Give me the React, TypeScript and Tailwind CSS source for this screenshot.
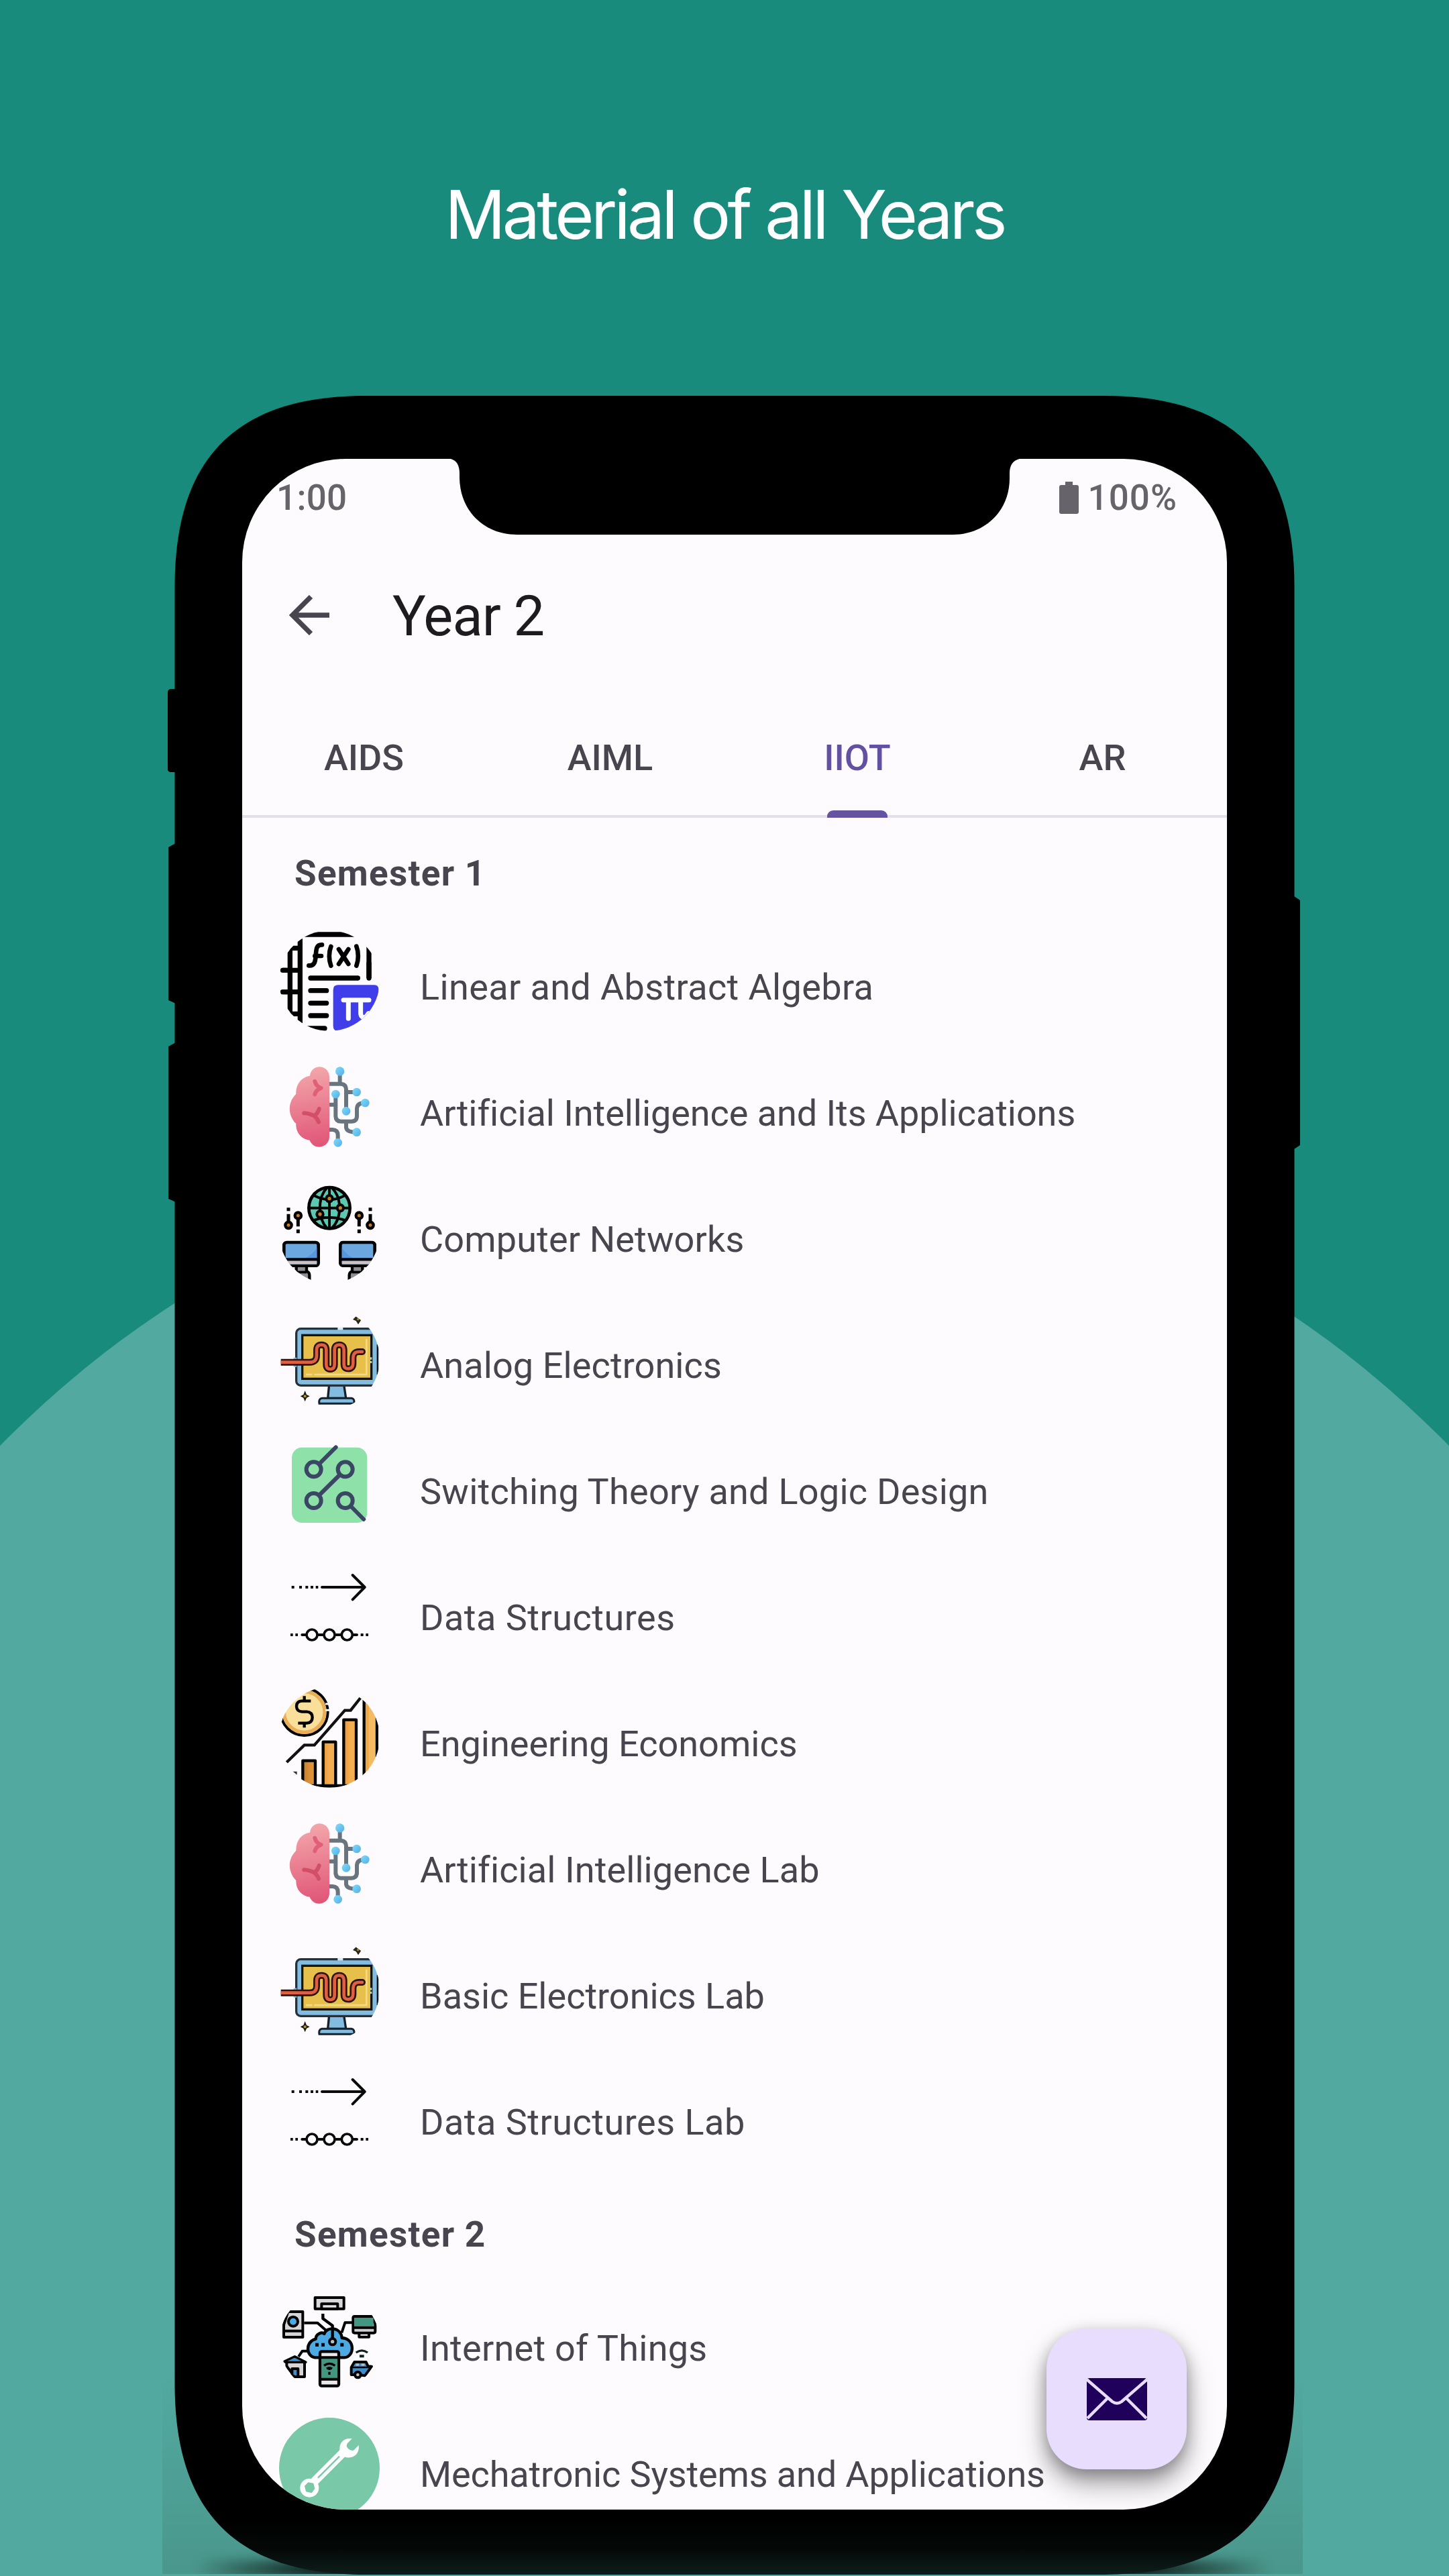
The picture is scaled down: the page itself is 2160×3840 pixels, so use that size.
import type { ReactNode } from "react";

/* ---------- subject icons (each one is clipped to a circle) ---------- */

function Round({ box, children }: { box: string; children: ReactNode }) {
  return (
    <svg viewBox={box} className="h-[150px] w-[150px] shrink-0 rounded-full" fill="none">
      {children}
    </svg>
  );
}

function AlgebraIcon() {
  return (
    <Round box="48 53 450 450">
      <g stroke="#000" strokeWidth="22">
        <path d="M120 71H400M142 90V470M97 130V430M450 115V266" />
        <path d="M64 231H142M64 328H142M97 132H142M97 426H142" />
        <g strokeLinecap="round">
          <path d="M64 231H80M64 328H80M189 266H400M189 322H260M189 378H260M189 434H260M160 491H252M450 200V266" />
        </g>
      </g>
      <g stroke="#000" strokeWidth="20" strokeLinecap="round" strokeLinejoin="round">
        <path d="M181 210C205 213 210 195 212 168C214 135 215 116 240 117M208 167H237" />
        <path d="M280 125C270 150 270 185 280 211M394 124C404 150 404 185 394 211M315 137L358 203M358 137L315 203" />
      </g>
      <path d="M312 297H475Q492 297 493 315V503H312Q290 503 290 480V319Q290 297 312 297Z" fill="#403EEB" />
      <g stroke="#fff" strokeWidth="21" strokeLinecap="round" strokeLinejoin="round">
        <path d="M336 364H450M358 366V447M413 366V425Q416 447 436 440L448 424" />
      </g>
    </Round>
  );
}

function BrainIcon() {
  return (
    <Round box="48 618 450 450">
      <defs>
        <linearGradient id="brain" x1="180" y1="660" x2="240" y2="1022" gradientUnits="userSpaceOnUse">
          <stop stopColor="#F3A9AC" />
          <stop offset="1" stopColor="#E15476" />
        </linearGradient>
        <linearGradient id="node" x1="0" y1="0" x2="1" y2="1">
          <stop stopColor="#7EDDF8" />
          <stop offset="1" stopColor="#56ACE8" />
        </linearGradient>
      </defs>
      <path
        d="M273 706C271 680 251 664 229 664C206 664 188 681 186 704C148 710 123 740 124 785C86 822 86 880 124 918C122 957 148 988 185 992C192 1010 207 1022 227 1022C252 1022 272 1003 273 978Z"
        fill="url(#brain)"
      />
      <path d="M208 729Q214 752 236 759Q214 766 208 787" stroke="#E0607A" strokeWidth="18" strokeLinecap="round" strokeLinejoin="round" />
      <path d="M160 871Q180 872 205 883Q222 872 227 852M205 883Q220 895 225 911" stroke="#D15067" strokeWidth="18" strokeLinecap="round" />
      <g stroke="#69757E" strokeWidth="18">
        <path d="M273 740H325Q348 742 348 765V860M320 740V690M348 777H390M273 833H301M301 790V885Q302 908 325 908H372Q396 907 396 884V850Q398 825 430 825M348 908V935Q350 956 392 956M273 945H288Q311 946 311 970V1000" />
      </g>
      <g fill="url(#node)">
        <circle cx="320" cy="684" r="20" />
        <circle cx="395" cy="777" r="19" />
        <circle cx="301" cy="786" r="19" />
        <circle cx="433" cy="825" r="19" />
        <circle cx="348" cy="862" r="19" />
        <circle cx="395" cy="956" r="19" />
        <circle cx="311" cy="1003" r="19" />
      </g>
    </Round>
  );
}

function Probe({ x, up }: { x: number; up?: boolean }) {
  return up ? (
    <g>
      <path d={`M${x} 218V268M${x} 281V298`} stroke="#000" strokeWidth="15" />
      <circle cx={x} cy="219" r="14" fill="#C47C26" stroke="#000" strokeWidth="13" />
    </g>
  ) : (
    <g>
      <path d={`M${x} 184V199M${x} 212V260`} stroke="#000" strokeWidth="15" />
      <circle cx={x} cy="262" r="14" fill="#C47C26" stroke="#000" strokeWidth="13" />
    </g>
  );
}

function Desktop({ x }: { x: number }) {
  return (
    <g transform={`translate(${x} 0)`}>
      <path d="M62 440H108V468Q121 472 121 486V515H10V480L62 472Z" fill="#8F8E96" stroke="#000" strokeWidth="13" />
      <path d="M62 472H108" stroke="#000" strokeWidth="11" />
      <rect x="7" y="339" width="154" height="104" rx="12" fill="#6DA7E0" stroke="#000" strokeWidth="14" />
      <path d="M154 362V410H100Q135 395 154 362Z" fill="#5797DE" />
      <path d="M10 415H158" stroke="#000" strokeWidth="13" />
      <path d="M14 430H154" stroke="#C4C3CB" strokeWidth="15" />
    </g>
  );
}

function NetworkIcon() {
  return (
    <Round box="48 72 450 450">
      <circle cx="273" cy="185" r="92" fill="#5BC8B2" stroke="#000" strokeWidth="14" />
      <g stroke="#000" strokeWidth="12">
        <path d="M273 92V278M180 185H366M205 130Q273 165 341 130M205 240Q273 215 341 240" />
        <path d="M262 95C220 140 220 230 262 275M284 95C330 140 330 230 284 275" />
      </g>
      <g fill="#C47C26" stroke="#000" strokeWidth="12">
        <circle cx="273" cy="143" r="14" />
        <circle cx="322" cy="185" r="14" />
        <circle cx="231" cy="213" r="14" />
      </g>
      <Probe x={90} />
      <Probe x={133} up />
      <Probe x={406} up />
      <Probe x={456} />
      <Desktop x={63} />
      <g transform="translate(546 0) scale(-1 1)">
        <Desktop x={63} />
      </g>
    </Round>
  );
}

function AnalogIcon() {
  return (
    <Round box="48 636 450 450">
      <path d="M272 975H338L347 1036H266Z" fill="#82BDE1" stroke="#16202A" strokeWidth="10" />
      <path d="M240 1036H372Q387 1038 383 1060H228Q224 1038 240 1036Z" fill="#82BDE1" stroke="#16202A" strokeWidth="9" />
      <rect x="125" y="725" width="400" height="254" rx="20" fill="#82BDE1" stroke="#25303A" strokeWidth="10" />
      <path d="M310 725H334" stroke="#D9EDF8" strokeWidth="11" />
      <rect x="152" y="754" width="309" height="195" fill="#E7C04B" stroke="#14140F" strokeWidth="10" />
      <path d="M439 770V930H205M196 930H168" stroke="#F3D98A" strokeWidth="8" />
      <path d="M120 854V896" stroke="#82BDE1" strokeWidth="14" />
      <g strokeLinejoin="round">
        <path
          d="M56 875H185Q216 875 216 845V820Q216 797 238 797Q259 797 259 820V885Q259 906 277 906Q296 906 296 885V820Q296 797 317 797Q338 797 338 820V885Q338 904 357 904Q379 904 379 880V855Q380 828 405 828H421"
          stroke="#2A1410"
          strokeWidth="30"
        />
        <circle cx="420" cy="828" r="15" fill="#2A1410" />
        <path
          d="M56 875H185Q216 875 216 845V820Q216 797 238 797Q259 797 259 820V885Q259 906 277 906Q296 906 296 885V820Q296 797 317 797Q338 797 338 820V885Q338 904 357 904Q379 904 379 880V855Q380 828 405 828H421"
          stroke="#DF5F42"
          strokeWidth="14"
        />
        <circle cx="420" cy="828" r="7" fill="#DF5F42" />
      </g>
      <path d="M459 853V882" stroke="#B8D9C0" strokeWidth="8" strokeDasharray="10 6" />
      <path d="M489 796V930" stroke="#0A1016" strokeWidth="8" />
      <path d="M493 780V940H500V780Z" fill="#FDFBFE" />
      <path d="M164 1002L171 1020L185 1027L171 1034L164 1051L157 1034L143 1027L157 1020Z" fill="#1C1A12" />
      <circle cx="164" cy="1027" r="6" fill="#B89A2C" />
      <path d="M378 684L392 670L406 681L415 686L402 706L392 690Z" fill="#2A281C" />
      <circle cx="401" cy="683" r="5" fill="#A8892A" />
    </Round>
  );
}

function SwitchingIcon() {
  return (
    <Round box="48 30 450 450">
      <rect x="105" y="86" width="337" height="337" rx="46" fill="#8DE1A9" />
      <g stroke="#3B4664" strokeWidth="18" strokeLinecap="round">
        <circle cx="203" cy="184" r="33" />
        <circle cx="344" cy="184" r="33" />
        <circle cx="203" cy="324" r="33" />
        <circle cx="344" cy="324" r="33" />
        <path d="M230 157L302 85M230 297L318 210M371 351L427 408" />
      </g>
    </Round>
  );
}

function DataIcon() {
  return (
    <Round box="48 594 450 450">
      <g stroke="#0A0A0A" strokeWidth="12">
        <path d="M240 711H430M377 657L431 711L377 766" strokeLinecap="round" strokeLinejoin="round" />
        <path d="M104 711H116M138 711H150M166 711H178M189 711H201M212 711H223M99 924H110M121 924H132M413 924H425M436 924H447" />
        <path d="M151 924H396" strokeLinecap="round" />
        <g fill="#FDFBFE" strokeWidth="11">
          <circle cx="195" cy="924" r="24" />
          <circle cx="273" cy="924" r="24" />
          <circle cx="352" cy="924" r="24" />
        </g>
      </g>
    </Round>
  );
}

function EconomicsIcon() {
  return (
    <Round box="48 78 450 450">
      <defs>
        <linearGradient id="bar" x1="0" x2="1" y1="0" y2="0">
          <stop stopColor="#EC983B" />
          <stop offset=".5" stopColor="#F3AE50" />
        </linearGradient>
        <linearGradient id="barDark" x1="0" x2="1" y1="0" y2="0">
          <stop stopColor="#C27F30" />
          <stop offset=".6" stopColor="#DC9238" />
        </linearGradient>
      </defs>
      <circle cx="161" cy="189" r="105" fill="#F9DF99" stroke="#000" strokeWidth="12" />
      <circle cx="161" cy="189" r="91" stroke="#EBAE58" strokeWidth="16" />
      <path d="M255 153H277M255 181H277" stroke="#FDFBFE" strokeWidth="9" />
      <path
        d="M190 140H148Q126 142 126 165Q127 186 150 188H172Q197 190 197 214Q196 237 172 239H133M161 118V140M161 239V259"
        stroke="#000"
        strokeWidth="13"
      />
      <path d="M82 414L161 337H206L342 182H368L412 126" stroke="#111" strokeWidth="13" />
      <g stroke="#000" strokeWidth="13" strokeLinejoin="round">
        <rect x="154" y="407" width="56" height="113" fill="url(#barDark)" />
        <rect x="245" y="323" width="56" height="197" fill="url(#bar)" />
        <rect x="337" y="224" width="56" height="296" fill="url(#bar)" />
        <rect x="428" y="112" width="55" height="408" fill="#F3BC63" stroke="none" />
        <path d="M428 130V480M190 519H360" />
        <path d="M486 210V390" />
      </g>
      <path d="M492 190V410H500V190Z" fill="#FDFBFE" />
      <path d="M442 130V460" stroke="#F0A748" strokeWidth="14" />
      <path d="M110 455L128 470V455Z" fill="#333" />
    </Round>
  );
}

function IotIcon() {
  return (
    <Round box="48 51 450 450">
      <g stroke="#000" strokeWidth="12" strokeLinejoin="round">
        <path d="M160 191H220L262 228M375 190H343L328 235M175 317H152L135 342" />
        <rect x="209" y="78" width="129" height="50" fill="#D9D8DC" />
        <rect x="238" y="106" width="72" height="22" fill="#E4E3E6" />
        <path d="M69 200L88 141H154V255H69Z" fill="#D5D5D7" />
        <path d="M69 227H154" />
        <circle cx="111" cy="185" r="21" fill="#4DA9E2" />
        <path d="M386 162H462L478 196V229Q478 236 471 236H386Q379 236 379 229V169Q379 162 386 162Z" fill="#CFCFD3" />
        <path d="M385 168H470V206H385Z" fill="#43967F" stroke="none" />
        <path d="M382 212H480M406 240V254H450V240" />
        <path
          d="M208 346C168 340 164 275 212 263C212 240 240 230 250 240C262 205 325 210 329 258C392 262 384 345 340 346Z"
          fill="#4DA9E2"
          strokeWidth="13"
        />
        <path d="M244 150V172L287 203V262" strokeWidth="13" />
        <circle cx="287" cy="275" r="14" fill="#BDBDC3" />
        <path d="M210 289H225M237 289H252M322 289H337" strokeWidth="16" />
        <rect x="231" y="319" width="84" height="154" rx="8" fill="#E9E9EB" strokeWidth="13" />
        <path d="M237 349H309V440H237Z" fill="#43967F" stroke="none" />
        <path d="M235 346H311M235 443H311" />
        <path d="M249 382Q273 364 298 382M261 396Q273 388 285 396M273 388V402M273 410V423" strokeWidth="10" />
        <path d="M82 365H162V432H118L82 385Z" fill="#D5D5D7" />
        <path d="M72 363L118 341L168 367H76Z" fill="#3D8FCB" strokeWidth="10" />
        <path d="M106 425V396H133V432H118Z" fill="#3D8FCB" />
        <path d="M371 423V390L385 366H437L446 385L462 386L432 427L400 423Z" fill="#3D8FCB" />
        <path d="M392 378H405M416 378H430" stroke="#A9BFCB" strokeWidth="11" />
        <path d="M371 390H460" strokeWidth="8" />
        <circle cx="400" cy="423" r="13" fill="#BDBDC3" />
        <path d="M392 324Q418 305 444 324" stroke="#10241E" strokeWidth="10" />
        <path d="M408 340H428" stroke="#10241E" strokeWidth="12" />
      </g>
    </Round>
  );
}

function WrenchIcon() {
  return (
    <Round box="48 615 450 450">
      <rect x="48" y="615" width="450" height="450" fill="#79C9A8" />
      <path d="M206 900L334 772" stroke="#fff" strokeWidth="38" />
      <path d="M222 884L318 788" stroke="#79C9A8" strokeWidth="7" />
      <circle cx="184" cy="929" r="42" fill="#fff" />
      <path d="M162 920L178 904L202 908L208 932L194 952L168 946Z" fill="#79C9A8" />
      <path
        d="M374 709C345 703 317 722 319 757C319 768 323 775 330 781C338 792 352 795 365 793C392 790 408 768 404 738L383 760C372 766 352 755 350 742C350 737 352 732 355 728Z"
        fill="#fff"
      />
    </Round>
  );
}

/* ---------- data ---------- */

const semesters = [
  {
    name: "Semester 1",
    subjects: [
      { title: "Linear and Abstract Algebra", Icon: AlgebraIcon, tracking: "tracking-[0.38px]" },
      { title: "Artificial Intelligence and Its Applications", Icon: BrainIcon, tracking: "tracking-[-0.06px]" },
      { title: "Computer Networks", Icon: NetworkIcon, tracking: "tracking-[0.14px]" },
      { title: "Analog Electronics", Icon: AnalogIcon, tracking: "tracking-[0.1px]" },
      { title: "Switching Theory and Logic Design", Icon: SwitchingIcon, tracking: "tracking-[0.25px]" },
      { title: "Data Structures", Icon: DataIcon, tracking: "tracking-[0.5px]" },
      { title: "Engineering Economics", Icon: EconomicsIcon, tracking: "tracking-normal" },
      { title: "Artificial Intelligence Lab", Icon: BrainIcon, tracking: "tracking-[0.1px]" },
      { title: "Basic Electronics Lab", Icon: AnalogIcon, tracking: "tracking-normal" },
      { title: "Data Structures Lab", Icon: DataIcon, tracking: "tracking-[0.5px]" },
    ],
  },
  {
    name: "Semester 2",
    subjects: [
      { title: "Internet of Things", Icon: IotIcon, tracking: "tracking-[0.27px]" },
      { title: "Mechatronic Systems and Applications", Icon: WrenchIcon, tracking: "tracking-[-0.13px]" },
    ],
  },
];

const tabs = ["AIDS", "AIML", "IIOT", "AR"];

/* ---------- device ---------- */

function DeviceShell() {
  return (
    <svg viewBox="250 590 1690 3248" className="absolute -left-[11px] top-0 h-[3248px] w-[1690px]">
      <defs>
        <linearGradient id="shell" x1="0" x2="0" y1="3760" y2="3838" gradientUnits="userSpaceOnUse">
          <stop stopColor="#000" />
          <stop offset=".5" stopColor="#040908" />
          <stop offset="1" stopColor="#0E1D1B" />
        </linearGradient>
      </defs>
      <path
        d="M260.500 874C260.500 682 353 590 545 590H1646C1838 590 1929.500 682 1929.500 874V3554C1929.500 3746 1838 3838 1646 3838H545C353 3838 260.500 3746 260.500 3554Z"
        fill="url(#shell)"
      />
      <path d="M262 1027H254Q250 1028 250 1032V1147Q250 1150 254 1151H262ZM262 1257L251 1263V1491L262 1496ZM262 1554L251 1560V1787L262 1792ZM1929 1336L1938 1342V1707L1929 1713Z" />
    </svg>
  );
}

function Notch() {
  return (
    <svg viewBox="660 684 872 114" className="absolute left-[299px] top-0 h-[114px] w-[872px]">
      <path d="M666 683C679 684 685 691 685 706V713C686 762 722 797 771 797H1420C1468 797 1505 762 1505 713V706C1505 691 1512 684 1526 683Z" />
    </svg>
  );
}

function StatusBar() {
  return (
    <div className="flex h-[120px] items-start justify-between pl-[51px] pr-[74px] pt-[25px] text-[53px] font-medium leading-[66px] text-[#66646A]">
      <span className="tracking-[0.3px]">1:00</span>
      <span className="flex items-center gap-[14px] tracking-[1px]">
        <svg viewBox="0 0 29 48" className="h-[48px] w-[29px]" fill="currentColor">
          <path d="M9 0H20V5H26Q29 5 29 8V45Q29 48 26 48H3Q0 48 0 45V8Q0 5 3 5H9Z" />
        </svg>
        100%
      </span>
    </div>
  );
}

function AppBar() {
  return (
    <header className="flex h-[226px] items-center pl-[70px] text-[#1D1B20]">
      <svg viewBox="0 0 60 60" className="h-[60px] w-[60px]" fill="none" stroke="#49454F" strokeWidth="7.4">
        <path d="M60 30H7M32.500 2.500L5 30L32.500 57.500" />
      </svg>
      <h2 className="ml-[94px] pt-[4px] text-[83px] leading-[100px] tracking-[-0.9px]">Year 2</h2>
    </header>
  );
}

function Tabs() {
  return (
    <nav className="grid h-[189px] grid-cols-4 border-b-[4px] border-[#E3E0E8] text-[54px] font-medium text-[#49454F]">
      {tabs.map((t) => (
        <div
          key={t}
          className={
            t === "IIOT"
              ? "relative flex items-center justify-center pr-[1px] pt-[14px] text-[#6250A0]"
              : "flex items-center justify-center pr-[4px] pt-[14px]"
          }
        >
          {t}
          {t === "IIOT" && <span className="absolute -bottom-[4px] h-[11px] w-[90px] rounded-t-[9px] bg-[#6552A0]" />}
        </div>
      ))}
    </nav>
  );
}

export default function App() {
  return (
    <div className="relative h-[3840px] w-[2160px] overflow-hidden bg-[#188B7D] font-['Roboto',sans-serif]">
      <div className="absolute -left-[431px] top-[1701px] h-[3022px] w-[3022px] rounded-full bg-[#52A9A0]" />

      <div className="absolute left-[242px] top-[3540px] h-[297px] w-[1700px] overflow-hidden bg-linear-to-b from-[#4a978c00] to-[#4a978c]">
        <div className="absolute bottom-[-6px] left-[50px] h-[26px] w-[1600px] bg-linear-to-r from-transparent via-[#0c1a18] via-12% to-transparent blur-[8px]" />
        <div className="absolute bottom-[-6px] left-[50px] h-[26px] w-[1600px] bg-linear-to-l from-transparent via-[#0c1a18] via-12% to-transparent blur-[8px]" />
      </div>

      <h1 className="relative flex h-[590px] justify-center pt-[259px] font-['Inter',sans-serif] text-[100px] leading-[121px] tracking-[-4.7px] text-white">
        Material of all Years
      </h1>

      <div className="relative ml-[261px] h-[3248px] w-[1669px] pl-[100px] pt-[94px]">
        <DeviceShell />
        <div className="relative h-[3057px] w-[1468px] overflow-hidden rounded-[154px] bg-[#FDFBFE]">
          <Notch />
          <StatusBar />
          <AppBar />
          <Tabs />
          {semesters.map((s) => (
            <section key={s.name}>
              <h3 className="flex h-[149px] items-center pl-[78px] pt-[19px] text-[53px] font-bold tracking-[1.3px] text-[#49454F]">{s.name}</h3>
              <ul>
                {s.subjects.map(({ title, Icon, tracking }) => (
                  <li key={title} className="flex h-[188px] items-center gap-[60px] pl-[55px] text-[54px] text-[#49454F]">
                    <Icon />
                    <span className={`whitespace-nowrap pt-[18px] ${tracking}`}>{title}</span>
                  </li>
                ))}
              </ul>
            </section>
          ))}
          <button className="absolute left-[1199px] top-[2787px] flex h-[210px] w-[209px] items-center justify-center rounded-[60px] bg-[#E8DDFC] shadow-[0_22px_40px_rgba(0,0,0,0.34),0_8px_22px_rgba(0,0,0,0.26)]">
            <svg viewBox="0 0 90 63" className="h-[63px] w-[90px]">
              <rect width="90" height="63" rx="4" fill="#1F005A" />
              <path d="M0 2L38 35Q45 40 52 35L90 2M1 60L32 29M89 60L58 29" fill="none" stroke="#E8DDFC" strokeWidth="4.500" />
            </svg>
          </button>
        </div>
      </div>
    </div>
  );
}
